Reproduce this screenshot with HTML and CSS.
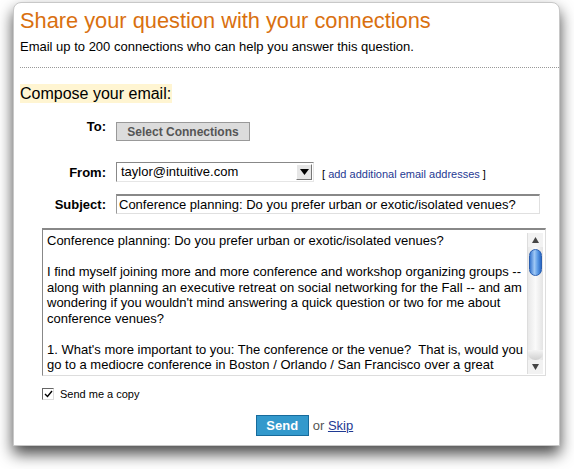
FILE: index.html
```html
<!DOCTYPE html>
<html>
<head>
<meta charset="utf-8">
<link rel="stylesheet" href="styles.css">
</head>
<body>
<div class="panel">
  <h1 class="title">Share your question with your connections</h1>
  <p class="subtitle">Email up to 200 connections who can help you answer this question.</p>
  <div class="divider"></div>
  <h2 class="compose"><span class="hl">Compose your email:</span></h2>
  <div class="form">
    <label class="lbl lbl-to">To:</label>
    <div class="ctl ctl-to"><button class="btn-select" type="button">Select Connections</button></div>
    <label class="lbl lbl-from">From:</label>
    <div class="ctl ctl-from">
      <div class="select"><span class="select-val">taylor@intuitive.com</span><span class="select-arrow"><svg width="9" height="6" viewBox="0 0 9 6"><path d="M0 0H9L4.5 6Z" fill="#000"/></svg></span></div>
      <span class="addlink">[ <a href="#">add additional email addresses</a> ]</span>
    </div>
    <label class="lbl lbl-subj">Subject:</label>
    <div class="ctl ctl-subj"><input class="subject" type="text" value="Conference planning: Do you prefer urban or exotic/isolated venues?"></div>
  </div>
  <div class="msgbox">
    <textarea class="msg" wrap="off">Conference planning: Do you prefer urban or exotic/isolated venues?

I find myself joining more and more conference and workshop organizing groups --
along with planning an executive retreat on social networking for the Fall -- and am
wondering if you wouldn't mind answering a quick question or two for me about
conference venues?

1. What's more important to you: The conference or the venue?  That is, would you
go to a mediocre conference in Boston / Orlando / San Francisco over a great</textarea>
    <div class="scroll">
      <div class="sb-up"><svg width="7" height="6" viewBox="0 0 7 6"><path d="M3.5 0L7 6H0Z" fill="#444"/></svg></div>
      <div class="sb-track">
        <div class="sb-thumb"></div>
        <div class="sb-end"></div>
      </div>
      <div class="sb-down"><svg width="7" height="6" viewBox="0 0 7 6"><path d="M0 0H7L3.5 6Z" fill="#444"/></svg></div>
    </div>
  </div>
  <div class="copyrow">
    <span class="check"><svg width="9" height="8" viewBox="0 0 9 8"><path d="M1 4L3.5 6.5L8 1" fill="none" stroke="#000" stroke-width="1.4"/></svg></span>
    <span class="copylbl">Send me a copy</span>
  </div>
  <div class="actions">
    <button class="btn-send" type="button">Send</button>
    <span class="or">or <a href="#">Skip</a></span>
  </div>
</div>
</body>
</html>
```

FILE: styles.css
```css
* { box-sizing: border-box; }
html, body { margin: 0; background: #fff; }
body {
  padding: 2px 14px 23px 13px;
  font-family: "Liberation Sans", Arial, sans-serif;
  color: #000;
}
.panel {
  height: 444px;
  background: #fff;
  border: 1px solid #c8c8c8;
  border-radius: 8px 8px 0 0;
  box-shadow: 0 8px 15px rgba(0,0,0,0.72);
  padding: 5px 0 0 6px;
}
.title {
  margin: 0;
  font-size: 21.8px;
  line-height: 26px;
  font-weight: normal;
  color: #d9700f;
}
.subtitle {
  margin: 5px 0 0;
  font-size: 13px;
  line-height: 16px;
}
.divider {
  margin: 12px 0 0;
  border-top: 1px dotted #999;
}
.compose {
  margin: 16px 0 0;
  font-size: 16px;
  line-height: 20px;
  font-weight: normal;
}
.hl { background: #fff5d2; padding: 1px 1px 1px 0; }
.form {
  display: grid;
  grid-template-columns: 86px 1fr;
  column-gap: 10px;
  margin-top: 15px;
  align-items: center;
}
.lbl {
  text-align: right;
  font-size: 13px;
  font-weight: bold;
}
.lbl-to { align-self: start; padding-top: 0; }
.ctl-to { height: 19px; }
.btn-select {
  display: block;
  margin-top: 3px;
  width: 134px;
  height: 19px;
  background: #dcdcdc;
  border: 1px solid #999;
  font-family: inherit;
  font-size: 12px;
  font-weight: bold;
  color: #555;
  padding: 0;
}
.ctl-from { display: flex; align-items: center; margin-top: 24px; }
.lbl-from { margin-top: 24px; }
.select {
  width: 198px;
  height: 20px;
  display: flex;
  border-top: 1px solid #888;
  border-left: 1px solid #888;
  border-right: 1px solid #e6e6e6;
  border-bottom: 1px solid #e6e6e6;
  background: #fff;
}
.select-val { flex: 1; font-size: 13px; line-height: 18px; padding-left: 4px; }
.select-arrow {
  width: 16px;
  height: 16px;
  margin: 1px 1px 0 0;
  border: 1px solid;
  border-color: #fff #777 #777 #fff;
  background: #e6e6e6;
  display: flex;
  align-items: center;
  justify-content: center;
}
.addlink { font-size: 11px; margin-left: 8px; margin-top: 4px; }
.addlink a { color: #1f3a93; text-decoration: none; }
.lbl-subj, .ctl-subj { margin-top: 12px; }
.subject {
  display: block;
  width: 424px;
  height: 20px;
  border-top: 2px solid #888;
  border-left: 1px solid #999;
  border-right: 1px solid #e0e0e0;
  border-bottom: 1px solid #e0e0e0;
  font-family: inherit;
  font-size: 13px;
  padding: 0 2px;
  color: #000;
}
.msgbox {
  display: flex;
  margin: 14px 0 0 22px;
  width: 504px;
  height: 148px;
  border-top: 2px solid #888;
  border-left: 1px solid #888;
  border-right: 1px solid #ddd;
  border-bottom: 1px solid #ddd;
  background: #fff;
}
.msg {
  flex: 1;
  border: 0;
  resize: none;
  overflow: hidden;
  font-family: inherit;
  font-size: 13px;
  line-height: 15.5px;
  padding: 3px 0 0 4px;
  color: #000;
  outline: none;
  white-space: pre;
}
.scroll {
  width: 16px;
  margin: 3px 2px 1px 0;
  display: flex;
  flex-direction: column;
  background: #f2f2f2;
  border-left: 1px solid #ddd;
}
.sb-up, .sb-down {
  height: 14px;
  display: flex;
  align-items: center;
  justify-content: center;
}
.sb-track {
  flex: 1;
  display: flex;
  flex-direction: column;
  justify-content: space-between;
  background: linear-gradient(90deg, #e8e8e8, #fafafa 50%, #e4e4e4);
}
.sb-thumb {
  margin: 2px 1px 0;
  height: 27px;
  border-radius: 7px;
  border: 1px solid #2a5fb0;
  background: linear-gradient(90deg, #3a78d0, #9fc8f5 40%, #5a9ae6 70%, #2a68c4);
}
.sb-end {
  height: 10px;
  border-radius: 0 0 7px 7px;
  background: linear-gradient(180deg, #f4f4f4, #d0d0d0);
}
.copyrow {
  display: flex;
  align-items: center;
  margin: 12px 0 0 22px;
}
.check {
  width: 12px;
  height: 12px;
  border-top: 1px solid #666;
  border-left: 1px solid #666;
  border-right: 1px solid #ddd;
  border-bottom: 1px solid #ddd;
  display: flex;
  align-items: center;
  justify-content: center;
  background: #fff;
}
.copylbl { font-size: 11px; margin-left: 6px; }
.actions {
  display: flex;
  justify-content: center;
  align-items: center;
  margin-top: 15px;
  padding-left: 30px;
}
.btn-send {
  width: 53px;
  height: 21px;
  background: #3399cc;
  border: 1px solid #176b9c;
  color: #fff;
  font-family: inherit;
  font-size: 13px;
  font-weight: bold;
  padding: 0;
}
.or { font-size: 13px; color: #555; margin-left: 4px; }
.or a { color: #1f3a93; text-decoration: underline; }
```
